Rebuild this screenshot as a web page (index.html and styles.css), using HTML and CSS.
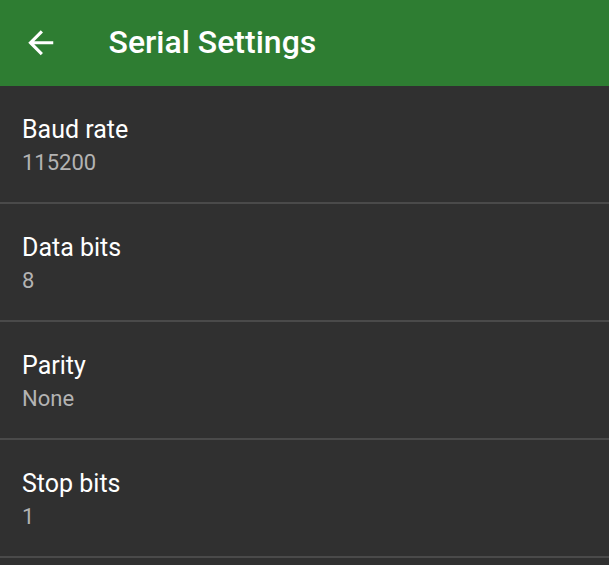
FILE: index.html
```html
<!DOCTYPE html>
<html>
<head>
<meta charset="utf-8">
<link rel="stylesheet" href="styles.css">
</head>
<body>
<header class="appbar">
  <span class="nav">
    <svg viewBox="0 0 24 24" width="37.5" height="37.5"><path fill="#fff" d="M20 11H7.83l5.59-5.59L12 4l-8 8 8 8 1.41-1.41L7.83 13H20v-2z"/></svg>
  </span>
  <h1 class="title">Serial Settings</h1>
</header>
<main class="list">
  <div class="pref"><div class="pref-title">Baud rate</div><div class="pref-summary">115200</div></div>
  <div class="pref"><div class="pref-title">Data bits</div><div class="pref-summary">8</div></div>
  <div class="pref"><div class="pref-title">Parity</div><div class="pref-summary">None</div></div>
  <div class="pref"><div class="pref-title">Stop bits</div><div class="pref-summary">1</div></div>
</main>
</body>
</html>
```
FILE: styles.css
```css
html, body {
  margin: 0;
  padding: 0;
  background: #303030;
  font-family: Roboto, "Liberation Sans", sans-serif;
  height: 100%;
  overflow: hidden;
}
.appbar {
  height: 86px;
  background: #2e7d32;
  display: flex;
  align-items: center;
  padding-left: 22px;
}
.nav {
  width: 37.5px;
  height: 37.5px;
  display: flex;
}
.title {
  margin: 0 0 0 49px;
  font-size: 32px;
  font-weight: 500;
  color: #fff;
  line-height: 1.171;
}
.pref {
  box-sizing: border-box;
  height: 118px;
  padding: 28px 22px 0;
  border-bottom: 2px solid #4a4a4a;
}
.pref-title {
  font-size: 25px;
  line-height: 32px;
  color: #fff;
}
.pref-summary {
  font-size: 22px;
  line-height: 34px;
  color: #b3b3b3;
}
```
